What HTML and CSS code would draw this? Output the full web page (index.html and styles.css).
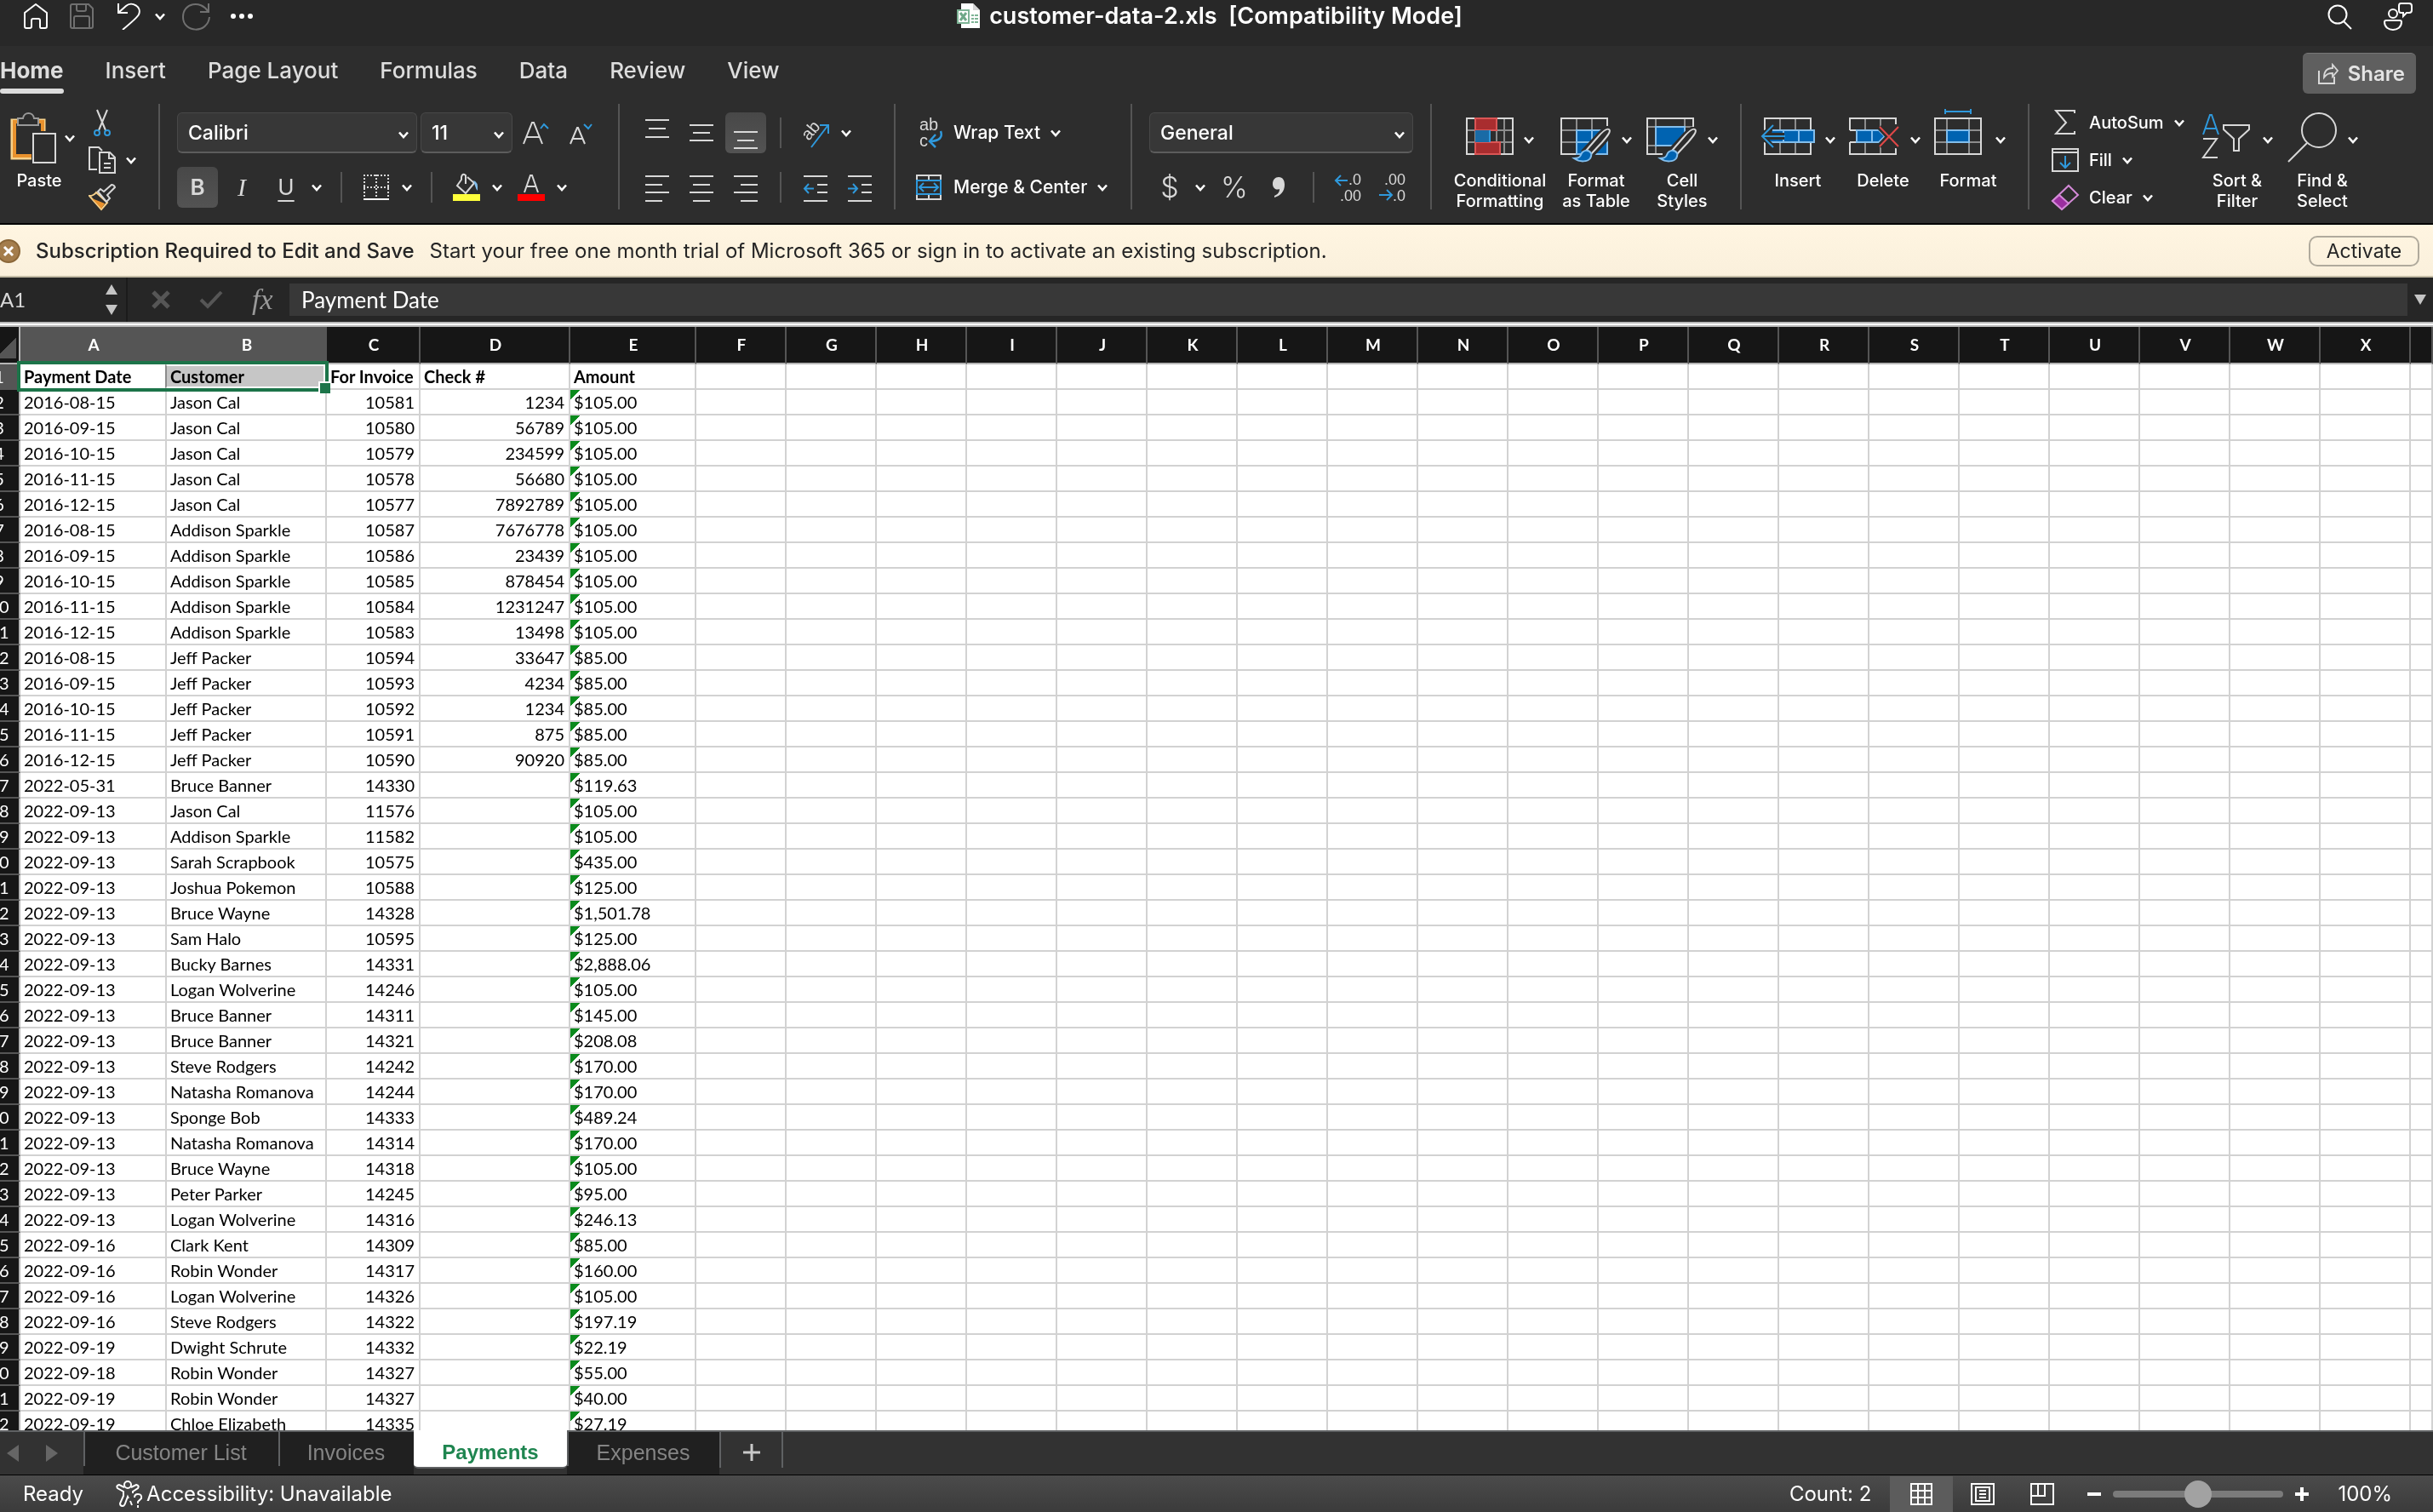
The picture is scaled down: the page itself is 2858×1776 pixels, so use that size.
FILE: index.html
```html
<!DOCTYPE html>
<html lang="en">
<head>
<meta charset="utf-8">
<title>customer-data-2.xls [Compatibility Mode]</title>
<link rel="stylesheet" href="styles.css">
</head>
<body>
<svg class="defs" aria-hidden="true">
  <symbol id="chev" viewBox="0 0 12 9"><path d="M1 1.5l5 5.500 5-5.500" fill="none" stroke="#fff" stroke-width="2.600"/></symbol>
  <symbol id="brush" viewBox="0 0 46 42">
    <path d="M44 3c-3-2-9 4-14 10L16 28l6 6 14-15C42 12 47 6 44 3z" fill="#2d2d2d" stroke="#2d2d2d" stroke-width="7"/>
    <path d="M44 3c-3-2-9 4-14 10L17 28l5 5 14-15C42 11 47 5 44 3z" fill="#2d2d2d" stroke="#d8d8d8" stroke-width="2"/>
    <path d="M23 31c-3-5-10-4-12 2-1 3-4 4-8 4 7 5 16 4 19 0 1-2 2-4 1-6z" fill="#0063b1" stroke="#83beec" stroke-width="2"/>
  </symbol>
</svg>
<div class="app">
  <header class="titlebar">
    <nav class="quick" aria-label="Quick access">
      <button class="plain home" aria-label="Home screen"><svg width="28" height="32" viewBox="0 0 28 32" fill="none" stroke="#fff" stroke-width="2"><path d="M1 12L14 2l13 10v16q0 2-2 2h-5q-1 0-1-2v-7q0-2-2-2h-6q-2 0-2 2v7q0 2-2 2H3q-2 0-2-2z" stroke-linejoin="round"/></svg></button>
      <button class="plain save" aria-label="Save"><svg width="28" height="30" viewBox="0 0 28 30" fill="none" stroke="#707070" stroke-width="2"><path d="M3 1h19l5 5v21q0 2-2 2H3q-2 0-2-2V3q0-2 2-2zM8 1v6q0 2 2 2h7q2 0 2-2V1M5 29V17q0-2 2-2h14q2 0 2 2v12"/></svg></button>
      <button class="plain undo" aria-label="Undo"><svg width="28" height="32" viewBox="0 0 28 32" fill="none" stroke="#fff" stroke-width="2"><path d="M2 1v11h11M2 12L11 4c7-6 19 1 15 10-1 3-7 8-19 18"/></svg></button>
      <button class="plain undo-menu" aria-label="Undo history"><svg class="chev"><use href="#chev"/></svg></button>
      <button class="plain redo" aria-label="Redo"><svg width="34" height="33" viewBox="0 0 34 33" fill="none" stroke="#707070" stroke-width="2"><path d="M31 1v10H21M30 10C22-3 1 0 1 17c0 19 29 20 31 0"/></svg></button>
      <button class="plain more" aria-label="More"><svg width="28" height="8" fill="#fff"><circle cx="4" cy="4" r="3"/><circle cx="14" cy="4" r="3"/><circle cx="24" cy="4" r="3"/></svg></button>
    </nav>
    <div class="doc">
      <svg width="28" height="32" viewBox="0 0 28 32"><path d="M5 1h14l8 8v21H5z" fill="#fff"/><path d="M19 1v8h8z" fill="#d5d5d5"/><path d="M0 8h15v17H0z" fill="#7db395"/><path d="M2 10h11v13H2z" fill="#fff"/><path d="M4 12l7 9M11 12l-7 9" stroke="#6fa888" stroke-width="3"/><path d="M17 14h3v2h-3zm4 0h4v2h-4zm-4 4h3v2h-3zm4 0h4v2h-4zm-4 4h3v2h-3zm4 0h4v2h-4z" fill="#7db395"/></svg>
      <h1>customer-data-2.xls&nbsp; [Compatibility Mode]</h1>
    </div>
    <div class="title-actions">
      <button class="plain" aria-label="Search"><svg width="30" height="32" viewBox="0 0 30 32" fill="none" stroke="#fff" stroke-width="2"><circle cx="12" cy="14" r="10.500"/><path d="M19 22l9 9"/></svg></button>
      <button class="plain" aria-label="Feedback"><svg width="34" height="34" viewBox="0 0 34 34" fill="none" stroke="#fff" stroke-width="2"><circle cx="11" cy="14" r="5"/><path d="M3 22h16q2 0 2 2c0 12-20 12-20 0q0-2 2-2zM20 2h10q3 0 3 3v5q0 3-3 3h-3l-4 4v-4h-3q-2 0-2-3V5q0-3 2-3z"/></svg></button>
    </div>
  </header>

  <div class="tabs">
    <nav aria-label="Ribbon tabs">
      <a href="#home" class="active">Home</a><a href="#insert">Insert</a><a href="#layout">Page Layout</a><a href="#formulas">Formulas</a><a href="#data">Data</a><a href="#review">Review</a><a href="#view">View</a>
    </nav>
    <button class="share"><svg width="24" height="25" viewBox="0 0 24 25" fill="none" stroke="#d8d8d8" stroke-width="2"><path d="M1 9v15h18v-8"/><path d="M7 17c0-7 3-11 10-11V2l6 7-6 7v-4c-5 0-7 1-10 5z" stroke-width="1.800"/></svg>Share</button>
  </div>

  <div class="ribbon">
    <section class="group clipboard">
      <button class="big paste"><span class="pic"><svg width="54" height="60" viewBox="0 0 54 60" fill="none"><path d="M9 9H2v45h23M33 9h7v13" stroke="#f8d28b" stroke-width="3"/><path d="M10 11H5v40h20M34 11h4v11" stroke="#e8912d" stroke-width="4"/><path d="M9 7h6c1-8 12-8 13 0h5v8H9z" fill="#2d2d2d" stroke="#999" stroke-width="2"/><path d="M27 25h26v34H27z" fill="#2d2d2d" stroke="#d8d8d8" stroke-width="2"/></svg><svg class="chev"><use href="#chev"/></svg></span><span>Paste</span></button>
      <div class="stack">
        <button class="plain" aria-label="Cut"><svg width="32" height="32" viewBox="0 0 32 32" fill="none" stroke-width="2"><path d="M10 1l10 24M22 1L12 25" stroke="#d8d8d8"/><circle cx="10" cy="28" r="3" stroke="#2f99dc"/><circle cx="22" cy="28" r="3" stroke="#2f99dc"/></svg></button>
        <div class="split copy"><button class="plain" aria-label="Copy"><svg width="32" height="32" viewBox="0 0 32 32" fill="none" stroke="#d8d8d8" stroke-width="2"><path d="M10 27H1V1h11l4 4M13 7h12l6 6v18H13zM24 7v7h7M18 20h8M18 25h8"/></svg></button><button class="plain" aria-label="Copy options"><svg class="chev"><use href="#chev"/></svg></button></div>
        <button class="plain" aria-label="Format painter"><svg width="32" height="32" viewBox="0 0 32 32" fill="none" stroke-width="2"><path d="M1 14q5 0 8-4l13 12-7 8z" stroke="#f8d28b"/><path d="M4 17l15 6-4 6z" fill="#e8912d"/><path d="M11 9l3-3 4 3 9-8q3 0 4 3l-9 9 3 4-4 4z" stroke="#d8d8d8" fill="#2d2d2d"/></svg></button>
      </div>
    </section>

    <section class="group font">
      <div class="row">
        <div class="pick font-name"><select aria-label="Font"><option>Calibri</option></select><svg class="chev"><use href="#chev"/></svg></div>
        <div class="pick font-size"><select aria-label="Font size"><option>11</option></select><svg class="chev"><use href="#chev"/></svg></div>
        <div class="split sizes">
          <button class="tool" aria-label="Increase font size"><svg width="32" height="32" viewBox="0 0 32 32" fill="none" stroke-width="2"><path d="M1 29L11 4h2l10 25M4 21h16" stroke="#d8d8d8"/><path d="M21 11l4-5 5 5" stroke="#2f99dc"/></svg></button>
          <button class="tool" aria-label="Decrease font size"><svg width="32" height="32" viewBox="0 0 32 32" fill="none" stroke-width="2"><path d="M4 29L12 10h1l8 19M7 23h11" stroke="#d8d8d8"/><path d="M20 6l5 5 4-5" stroke="#2f99dc"/></svg></button>
        </div>
      </div>
      <div class="row">
        <button class="tool on letter bold">B</button>
        <button class="tool letter italic">I</button>
        <div class="split"><button class="tool letter under">U</button><button class="plain menu" aria-label="Underline options"><svg class="chev"><use href="#chev"/></svg></button></div>
        <i class="bar"></i>
        <div class="split"><button class="tool" aria-label="Borders"><svg width="30" height="32" viewBox="0 0 30 32" fill="none" stroke="#d8d8d8" stroke-width="2"><path d="M0 2h30M0 16h30M1 1v26M15 1v26M29 1v26" stroke-dasharray="2 2"/><path d="M0 30h30" stroke="#fff"/></svg></button><button class="plain menu" aria-label="Border options"><svg class="chev"><use href="#chev"/></svg></button></div>
        <i class="bar"></i>
        <div class="split"><button class="tool" aria-label="Fill color"><svg width="32" height="32" viewBox="0 0 32 32" fill="none"><path d="M15 12V2q-4-3-5 2v3L5 14l10 9 10-12-8-7" stroke="#d8d8d8" stroke-width="2"/><path d="M24 8q6 1 5 12-2-2-3-6z" fill="#83beec"/><path d="M0 24h32v8H0z" fill="#ffff3b"/></svg></button><button class="plain menu" aria-label="Fill color options"><svg class="chev"><use href="#chev"/></svg></button></div>
        <div class="split"><button class="tool" aria-label="Font color"><svg width="32" height="32" viewBox="0 0 32 32" fill="none"><path d="M8 22l7-20h2l7 20M10 15h12" stroke="#d8d8d8" stroke-width="2"/><path d="M0 24h32v8H0z" fill="#f00"/></svg></button><button class="plain menu" aria-label="Font color options"><svg class="chev"><use href="#chev"/></svg></button></div>
      </div>
    </section>

    <section class="group align">
      <div class="row">
        <button class="tool" aria-label="Top align"><svg class="lines" viewBox="0 0 28 32"><path d="M0 1h28M4 11h20M0 21h28"/></svg></button>
        <button class="tool" aria-label="Middle align"><svg class="lines" viewBox="0 0 28 32"><path d="M0 7h28M4 16h20M0 25h28"/></svg></button>
        <button class="tool on" aria-label="Bottom align"><svg class="lines" viewBox="0 0 28 32"><path d="M0 15h28M4 25h20M0 34h28"/></svg></button>
        <i class="bar"></i>
        <div class="split"><button class="tool" aria-label="Orientation"><svg width="34" height="36" viewBox="0 0 34 36" fill="none"><text x="0" y="0" transform="translate(9 28) rotate(-50)" class="glyph">ab</text><path d="M12 35L31 10M22 9h10v10" stroke="#2f99dc" stroke-width="2"/></svg></button><button class="plain menu" aria-label="Orientation options"><svg class="chev"><use href="#chev"/></svg></button></div>
      </div>
      <div class="row">
        <button class="tool" aria-label="Align left"><svg class="lines" viewBox="0 0 28 32"><path d="M0 3h28M0 13h20M0 22h28M0 32h20"/></svg></button>
        <button class="tool" aria-label="Center"><svg class="lines" viewBox="0 0 28 32"><path d="M0 3h28M4 13h20M0 22h28M4 32h20"/></svg></button>
        <button class="tool" aria-label="Align right"><svg class="lines" viewBox="0 0 28 32"><path d="M0 3h28M8 13h20M0 22h28M8 32h20"/></svg></button>
        <i class="bar"></i>
        <button class="tool" aria-label="Decrease indent"><svg class="lines" viewBox="0 0 28 32"><path d="M0 3h28M16 13h12M16 22h12M0 32h28"/><path class="blue" d="M12 17.500H1M6 12l-5 5.500 5 5.500"/></svg></button>
        <button class="tool" aria-label="Increase indent"><svg class="lines" viewBox="0 0 28 32"><path d="M0 3h28M16 13h12M16 22h12M0 32h28"/><path class="blue" d="M0 17.500h11M6 12l5 5.500-5 5.500"/></svg></button>
      </div>
    </section>

    <section class="group wrap">
      <button class="wide"><svg width="32" height="40" viewBox="0 0 32 40" fill="none"><text x="4" y="17" class="glyph">ab</text><text x="4" y="36" class="glyph">c</text><path d="M29 18q4 11-12 12M23 22l-7 8 7 7" stroke="#2f99dc" stroke-width="2.500"/></svg>Wrap Text<svg class="chev"><use href="#chev"/></svg></button>
      <button class="wide"><svg width="32" height="32" viewBox="0 0 32 32" fill="none" stroke-width="2"><path d="M1 8V2h28v6M15 2v6M1 24v6h28v-6M15 24v6" stroke="#d8d8d8"/><path d="M1 8h28v16H1zM5 16h20M9 11l-5 5 5 5M21 11l5 5-5 5" stroke="#2f99dc"/></svg>Merge &amp; Center<svg class="chev"><use href="#chev"/></svg></button>
    </section>

    <section class="group number">
      <div class="row"><div class="pick format"><select aria-label="Number format"><option>General</option></select><svg class="chev"><use href="#chev"/></svg></div></div>
      <div class="row">
        <div class="split"><button class="tool symbol">$</button><button class="plain menu" aria-label="Currency options"><svg class="chev"><use href="#chev"/></svg></button></div>
        <button class="tool symbol">%</button>
        <button class="tool" aria-label="Comma style"><svg width="16" height="26" viewBox="0 0 16 26"><path d="M8 1c5 0 7 4 7 9 0 8-5 13-12 15v-2c4-2 6-4 6-8-5 2-8-2-8-6 0-5 3-8 7-8z" fill="#d8d8d8"/></svg></button>
        <i class="bar"></i>
        <button class="tool" aria-label="Increase decimal"><svg width="32" height="40" viewBox="0 0 32 40" fill="none"><text x="31" y="17" text-anchor="end" class="glyph digits">.0</text><text x="31" y="36" text-anchor="end" class="glyph digits">.00</text><path d="M15 12H1M7 6l-6 6 6 6" stroke="#2f99dc" stroke-width="2"/></svg></button>
        <button class="tool" aria-label="Decrease decimal"><svg width="32" height="40" viewBox="0 0 32 40" fill="none"><text x="31" y="17" text-anchor="end" class="glyph digits">.00</text><text x="31" y="36" text-anchor="end" class="glyph digits">.0</text><path d="M0 29h15M9 23l6 6-6 6" stroke="#2f99dc" stroke-width="2"/></svg></button>
      </div>
    </section>

    <section class="group styles">
      <button class="big cond"><span class="pic"><svg width="56" height="60" viewBox="0 0 56 60" fill="none" stroke-width="2"><path d="M11 5v42M45 5v42M36 5v42M1 19h54M1 33h54" stroke="#8c8c8c"/><path d="M1 5h54v42H1z" stroke="#d8d8d8"/><path d="M11 5h25v14H11zM11 33h29v14H11z" fill="#a92d2f" stroke="#da5555"/><path d="M11 19h17v14H11z" fill="#1a6ba6"/><path d="M28 19v14" stroke="#2f99dc"/></svg><svg class="chev"><use href="#chev"/></svg></span><span>Conditional<br>Formatting</span></button>
      <button class="big table"><span class="pic"><svg width="60" height="60" viewBox="0 0 60 60" fill="none" stroke-width="2"><path d="M19 5v42M37 5v14M1 19h54M1 33h18" stroke="#8c8c8c"/><path d="M55 14V5H1v42h18" stroke="#d8d8d8"/><path d="M19 19h36v28H19zM19 33h36M37 19v28" fill="#0063b1" stroke="#83beec"/><use href="#brush" x="13" y="15" width="46" height="42"/></svg><svg class="chev"><use href="#chev"/></svg></span><span>Format<br>as Table</span></button>
      <button class="big cell"><span class="pic"><svg width="60" height="60" viewBox="0 0 60 60" fill="none" stroke-width="2"><path d="M11 5v42M45 5v10M1 15h54M1 37h10" stroke="#8c8c8c"/><path d="M55 16V5H1v42h18" stroke="#d8d8d8"/><path d="M11 15h34v22H11z" fill="#0063b1" stroke="#83beec"/><use href="#brush" x="13" y="15" width="46" height="42"/></svg><svg class="chev"><use href="#chev"/></svg></span><span>Cell<br>Styles</span></button>
    </section>

    <section class="group cells">
      <button class="big"><span class="pic"><svg width="64" height="60" viewBox="0 0 64 60" fill="none" stroke-width="2"><path d="M23 5v14M41 5v14M23 33v14M41 33v14" stroke="#8c8c8c"/><path d="M5 19V5h54v14M5 33v14h54V33" stroke="#d8d8d8"/><path d="M14 19h49v14H10M27 19v14M45 19v14" fill="#0063b1" stroke="#83beec"/><path d="M10 26h18" stroke="#2d2d2d" stroke-width="8"/><path d="M15 13L2 26l13 13" stroke="#2d2d2d" stroke-width="6"/><path d="M10 22h18v8H10" stroke="#2f99dc" stroke-width="0"/><path d="M2 26h27M15 13L2 26l13 13" stroke="#2f99dc"/></svg><svg class="chev"><use href="#chev"/></svg></span><span>Insert</span></button>
      <button class="big"><span class="pic"><svg width="64" height="60" viewBox="0 0 64 60" fill="none" stroke-width="2"><path d="M23 5v14M41 5v14M23 33v14M41 33v14" stroke="#8c8c8c"/><path d="M5 19V5h54v7M5 19h8M5 33h8M5 33v14h54v-7" stroke="#d8d8d8"/><path d="M13 19h26l7 7-7 7H13zM31 19v14" fill="#0063b1" stroke="#83beec"/><path d="M40 15l22 23M62 15L40 38" stroke="#2d2d2d" stroke-width="7"/><path d="M40 15l22 23M62 15L40 38" stroke="#e04848"/></svg><svg class="chev"><use href="#chev"/></svg></span><span>Delete</span></button>
      <button class="big"><span class="pic"><svg width="64" height="60" viewBox="0 0 64 60" fill="none" stroke-width="2" overflow="visible"><path d="M19 5v42M45 5v42M5 19h54M5 33h54" stroke="#8c8c8c"/><path d="M5 5h54v42H5z" stroke="#d8d8d8"/><path d="M19 19h26v14H19z" fill="#0063b1" stroke="#83beec"/><path d="M17-3h30M17-6v6M47-6v6" stroke="#2f99dc"/></svg><svg class="chev"><use href="#chev"/></svg></span><span>Format</span></button>
    </section>

    <section class="group editing">
      <div class="stack">
        <button class="wide"><svg width="32" height="32" viewBox="0 0 32 32" fill="none" stroke="#d8d8d8" stroke-width="2"><path d="M27 5V2H5l12 14L5 29h22v-3"/></svg>AutoSum<svg class="chev"><use href="#chev"/></svg></button>
        <button class="wide"><svg width="32" height="32" viewBox="0 0 32 32" fill="none" stroke="#d8d8d8" stroke-width="2"><path d="M1 3h30v26H1zM1 7h30"/><path d="M16 11v14M10 19l6 6 6-6" stroke="#2f99dc"/></svg>Fill<svg class="chev"><use href="#chev"/></svg></button>
        <button class="wide"><svg width="32" height="32" viewBox="0 0 32 32" fill="none" stroke="#d48ad8" stroke-width="2"><path d="M20 2l11 11-19 17L1 20z"/><path d="M9 13l11 10-8 7L1 20z" fill="#9b2fa0"/></svg>Clear<svg class="chev"><use href="#chev"/></svg></button>
      </div>
      <button class="big"><span class="pic"><svg width="60" height="60" viewBox="0 0 60 60" fill="none" stroke="#d8d8d8" stroke-width="2"><path d="M2 24l8-23h2l8 23M5 17h12" stroke="#2f99dc"/><path d="M2 29h16L2 51h17M26 13h30v5L44 29v14h-6V29L26 18z"/></svg><svg class="chev"><use href="#chev"/></svg></span><span>Sort &amp;<br>Filter</span></button>
      <button class="big"><span class="pic"><svg width="60" height="60" viewBox="0 0 60 60" fill="none" stroke="#d8d8d8" stroke-width="2" overflow="visible"><circle cx="38" cy="19" r="20"/><path d="M24 34L2 56"/></svg><svg class="chev"><use href="#chev"/></svg></span><span>Find &amp;<br>Select</span></button>
    </section>
  </div>

  <div class="notice" role="status">
    <button class="plain dismiss" aria-label="Dismiss"><svg width="24" height="28" viewBox="0 0 24 28"><circle cx="10" cy="14" r="13" fill="#a47d4c" stroke="#8a6638" stroke-width="2"/><path d="M5 9l10 10M15 9L5 19" stroke="#fff" stroke-width="3"/></svg></button>
    <strong>Subscription Required to Edit and Save</strong>
    <span>Start your free one month trial of Microsoft 365 or sign in to activate an existing subscription.</span>
    <button class="activate">Activate</button>
  </div>

  <div class="formula">
    <div class="cellref"><span>A1</span><svg width="14" height="38" viewBox="0 0 14 38" fill="#c4c4c4"><path d="M0 13L7 1l7 12zM0 25l7 12 7-12z"/></svg></div>
    <div class="fx-tools">
      <button class="plain" aria-label="Cancel"><svg width="22" height="22" viewBox="0 0 22 22"><path d="M2 2l18 18M20 2L2 20" stroke="#565656" stroke-width="5"/></svg></button>
      <button class="plain" aria-label="Enter"><svg width="28" height="22" viewBox="0 0 28 22"><path d="M2 11l8 8L26 2" fill="none" stroke="#565656" stroke-width="4"/></svg></button>
      <button class="plain fx">fx</button>
    </div>
    <input type="text" value="Payment Date" aria-label="Formula">
    <button class="plain expand" aria-label="Expand formula bar"><svg width="14" height="12" fill="#c4c4c4"><path d="M0 0h14L7 12z"/></svg></button>
  </div>

  <main class="sheet">
    <table id="grid"></table>
    <div class="selection"></div>
  </main>

  <nav class="sheets" aria-label="Sheets">
    <div class="arrows">
      <button class="plain" aria-label="Previous sheet"><svg width="14" height="20" fill="#666"><path d="M14 0v20L0 10z"/></svg></button>
      <button class="plain" aria-label="Next sheet"><svg width="14" height="20" fill="#666"><path d="M0 0v20l14-10z"/></svg></button>
    </div>
    <a href="#customers" class="t1">Customer List</a><a href="#invoices" class="t2">Invoices</a><a href="#payments" class="current">Payments</a><a href="#expenses" class="t3">Expenses</a>
    <button class="add" aria-label="Add sheet"><svg width="20" height="20"><path d="M10 0v20M0 10h20" stroke="#c8c8c8" stroke-width="3"/></svg></button>
  </nav>

  <footer class="status">
    <span class="ready">Ready</span>
    <button class="access"><svg width="32" height="32" viewBox="0 0 32 32" fill="none" stroke="#fff" stroke-width="2"><circle cx="14" cy="5" r="4"/><path d="M10 8L4 5q-4 1-2 4l7 4v5L5 27q0 3 3 3 2 0 3-3l3-8 1 2M18 8l6-3q4 1 2 4l-6 4v2M17 24l2 5"/><path d="M22 20q0-4 4-4 5 0 4 5l-4 4v2M26 29v3"/></svg>Accessibility: Unavailable</button>
    <span class="count">Count: 2</span>
    <div class="views">
      <button class="on" aria-label="Normal view"><svg width="26" height="28" viewBox="0 0 26 28" fill="none" stroke="#fff" stroke-width="2"><path d="M1 2h24v24H1zM9 2v24M17 2v24M1 10h24M1 18h24"/></svg></button>
      <button aria-label="Page layout view"><svg width="28" height="28" viewBox="0 0 28 28" fill="none" stroke="#fff" stroke-width="2"><path d="M1 2h26v24H1zM6 6h16v16H6zM10 10h8M10 14h8M10 18h8"/></svg></button>
      <button aria-label="Page break view"><svg width="28" height="28" viewBox="0 0 28 28" fill="none" stroke="#fff" stroke-width="2"><path d="M1 2h26v24H1zM9 2v14M17 2v14H1"/></svg></button>
    </div>
    <button class="plain" aria-label="Zoom out"><svg width="16" height="16"><path d="M0 8h16" stroke="#fff" stroke-width="4"/></svg></button>
    <input type="range" min="0" max="100" value="50" aria-label="Zoom">
    <button class="plain" aria-label="Zoom in"><svg width="16" height="16"><path d="M0 8h16M8 0v16" stroke="#fff" stroke-width="4"/></svg></button>
    <span class="percent">100%</span>
  </footer>
</div>
<script src="grid.js"></script>
</body>
</html>
```
FILE: styles.css
```css
* { box-sizing: border-box; }
body { margin: 0; background: #282828; color: #fff; font: 500 20px/24px Inter, "Liberation Sans", sans-serif; }
.defs { position: absolute; width: 0; height: 0; }
button, select, input { font: inherit; color: inherit; margin: 0; }
button { border: 0; padding: 0; background: none; }
svg { display: block; flex: none; }
a { color: inherit; text-decoration: none; }
.chev { width: 12px; height: 9px; }
.app { display: flex; flex-direction: column; height: 100vh; overflow: hidden; }

.titlebar { display: grid; grid-template-columns: 1fr auto 1fr; height: 54px; padding: 2px 24px 0 28px; align-items: start; background: #282828; }
.quick { display: flex; align-items: center; height: 34px; }
.save { margin-left: 26px; }
.undo { margin-left: 27px; }
.undo-menu { margin-left: 17px; }
.redo { margin-left: 20px; }
.more { margin-left: 22px; }
.doc { display: flex; align-items: center; gap: 10px; height: 34px; padding-right: 20px; }
.doc h1 { margin: 0; font-size: 27px; line-height: 34px; font-weight: 600; white-space: nowrap; }
.title-actions { display: flex; justify-content: flex-end; gap: 36px; }

.tabs { display: flex; justify-content: space-between; height: 58px; padding-right: 20px; background: #2d2d2d; }
.tabs nav { display: flex; gap: 49px; }
.tabs a { position: relative; padding-top: 12px; font-size: 26px; line-height: 34px; color: #ddd; white-space: nowrap; }
.tabs .active { font-weight: 700; }
.tabs .active::after { content: ""; position: absolute; left: 0; right: 0; bottom: 2px; height: 6px; border-radius: 3px; background: #dcdcdc; }
.share { display: flex; align-items: center; gap: 11px; align-self: flex-start; height: 48px; margin-top: 8px; padding: 0 13px 0 18px; border-radius: 6px; border-top: 1px solid #777; background: #5f5f5f; color: #e4e4e4; font-size: 24px; font-weight: 600; }

.ribbon { display: flex; padding: 10px 0 16px; border-bottom: 2px solid #000; height: 152px; background: #2d2d2d; }
.group { display: flex; flex-direction: column; gap: 16px; height: 124px; padding: 10px 0 0 20px; border-right: 2px solid #555; flex: none; }
.row, .split { display: flex; align-items: center; }
.row { gap: 4px; height: 48px; }
.sizes { gap: 4px; }
.bar { width: 2px; height: 36px; margin: 0 12px; background: #555; }
.tool { display: flex; align-items: center; justify-content: center; width: 48px; height: 48px; border-radius: 6px; }
.tool.on { background: linear-gradient(#484848, #535353); }
.menu { display: flex; justify-content: center; width: 24px; }
.letter { font-size: 26px; line-height: 30px; color: #d8d8d8; font-weight: 400; }
.bold { font-weight: 600; }
.italic { font-family: "Liberation Serif", serif; font-style: italic; font-size: 30px; }
.under { text-decoration: underline; text-underline-offset: 6px; text-decoration-thickness: 2px; }
.symbol { font: 300 34px/40px Inter, sans-serif; color: #d8d8d8; }
.pick { display: grid; align-items: center; }
.pick > * { grid-area: 1 / 1; }
.pick .chev { justify-self: end; margin-right: 10px; margin-top: 4px; pointer-events: none; }
.pick select { appearance: none; width: 100%; height: 48px; padding: 0 12px; border: 1px solid #484848; border-bottom: 2px solid #5c5c5c; border-radius: 6px; background: #373737; font-size: 23px; }
.font-name { width: 282px; }
.font-size { width: 108px; }
.format { width: 310px; }
.tool svg, .wide svg { overflow: visible; }
.glyph { font: 400 20px/20px "Liberation Sans", sans-serif; fill: #d8d8d8; }
.digits { font-size: 18px; }
.lines { width: 28px; height: 32px; stroke: #d8d8d8; stroke-width: 2px; fill: none; }
.lines .blue { stroke: #2f99dc; }

.big { display: flex; flex-direction: column; align-items: center; width: 100px; color: #fff; }
.pic { display: flex; align-items: center; gap: 12px; height: 60px; margin: 2px 0 6px; }
.stack { display: flex; flex-direction: column; gap: 12px; align-items: flex-start; margin-top: -4px; }
.wide { display: flex; align-items: center; gap: 12px; height: 32px; white-space: nowrap; }
.clipboard, .styles, .cells, .editing { flex-direction: row; align-items: flex-start; gap: 0; }
.clipboard { width: 188px; padding-left: 0; }
.paste { width: 92px; }
.paste .pic { gap: 10px; margin: 0 0 8px; padding-left: 8px; }
.clipboard .stack { padding-left: 12px; }
.copy { gap: 12px; }
.font { width: 540px; }
.align { width: 324px; }
.wrap { width: 278px; padding-left: 24px; }
.wrap .wide { height: 48px; font-size: 21px; }
.number { width: 352px; }
.styles { width: 364px; }
.cond { width: 120px; }
.table { width: 106px; }
.cell { width: 96px; }
.cells { width: 338px; padding-left: 16px; }
.editing { padding-left: 26px; border-right: 0; }
.editing .stack { width: 168px; }

.notice { display: flex; align-items: center; height: 62px; padding: 1px 16px 0 0; border-bottom: 2px solid #c4bca6; background: linear-gradient(#fff5e1, #faf0dc); color: #252525; font-size: 24px; line-height: 30px; white-space: nowrap; }
.notice strong { font-weight: 500; margin: 0 18px; }
.notice span { font-weight: 400; }
.activate { margin-left: auto; width: 130px; height: 36px; border: 2px solid #b0aa9c; border-radius: 10px; font-size: 23px; font-weight: 400; }

.formula { display: flex; align-items: center; height: 52px; padding-right: 8px; background: #262626; font: 400 26px/32px Lato, sans-serif; flex: none; }
.cellref { display: flex; align-items: center; justify-content: space-between; width: 150px; height: 52px; padding-right: 10px; border-right: 2px solid #1b1b1b; color: #d8d8d8; font-size: 24px; }
.fx-tools { display: flex; align-items: center; gap: 34px; width: 190px; padding-left: 28px; }
.fx { font: italic 34px/36px "Liberation Serif", serif; color: #999; }
.formula input { flex: 1; min-width: 0; height: 38px; padding: 0 14px; border: 0; background: #383838; }
.expand { padding-left: 8px; }

.sheet { position: relative; flex: 1; min-height: 0; overflow: hidden; border-top: 6px double #b9b9b9; background: #fff; color: #000; }
.sheet table { table-layout: fixed; width: calc(100% + 24px); margin-left: -24px; border-collapse: separate; border-spacing: 0; font: 400 20px/28px Lato, sans-serif; }
.c-head { width: 48px; }
.c-a { width: 172px; }
.c-b { width: 188px; }
.c-c { width: 110px; }
.c-d { width: 176px; }
.c-e { width: 148px; }
.c-std { width: 106px; }
.sheet td { height: 30px; padding: 0 4px; border-right: 2px solid #d2d2d2; border-bottom: 2px solid #d2d2d2; white-space: nowrap; }
.sheet .num { padding-right: 5px; text-align: right; }
.sheet .title td { font-weight: 700; }
.sheet .flag { background: linear-gradient(135deg, #0a8a1c 8px, transparent 8px) no-repeat; }
.sheet thead th { height: 44px; padding: 0 0 0 2px; border-right: 2px solid #555; border-bottom: 2px solid #b5b5b5; background: #161616; color: #fff; font-size: 19px; font-weight: 700; }
.sheet thead .picked { background: #555; }
.sheet thead .corner { border-right-color: #b5b5b5; background: linear-gradient(135deg, #161616 50%, #555 50%) 24px 7px / 19px 30px no-repeat #161616; }
.sheet tbody th { padding: 0; border-right: 2px solid #b5b5b5; border-bottom: 2px solid #555; background: #161616; color: #fff; font-weight: 400; }
.sheet .title th { background: #555; }
.selection { position: absolute; left: 20px; top: 40px; width: 366px; height: 36px; border: 4px solid #1c7449; }
.selection::before { content: ""; position: absolute; left: 170px; right: 0; top: 0; bottom: 0; border: 2px solid #fff; border-left: 2px solid #aaa; background: #c6c6c6; mix-blend-mode: multiply; }
.selection::after { content: ""; position: absolute; right: -6px; bottom: -6px; width: 12px; height: 12px; border: 2px solid #fff; border-right: 0; border-bottom: 0; background: #1c7449; }

.sheets { display: flex; height: 53px; flex: none; border-bottom: 1px solid #000; background: #323232; color: #858585; font: 400 25px/30px "Liberation Sans", sans-serif; box-shadow: inset 0 2px #5f6163; }
.arrows { display: flex; align-items: center; gap: 32px; width: 98px; padding: 2px 8px 0; }
.sheets a { display: flex; align-items: center; justify-content: center; padding-bottom: 2px; margin-top: 2px; background: linear-gradient(#5f6163, #5f6163) 0 0 / 2px 40px no-repeat #202020; }
.t1 { width: 229px; }
.t2 { width: 159px; }
.t3 { width: 179px; }
.sheets .current { width: 180px; height: 45px; margin-top: 0; padding: 8px 0 0; border-radius: 0 0 5px 5px; border-bottom: 2px solid #5f6163; background: #fff; color: #1f8550; font-weight: 700; font-size: 24px; }
.add { display: flex; align-items: center; justify-content: center; width: 75px; height: 42px; margin-top: 2px; padding-top: 6px; border: solid #5f6163; border-width: 0 2px; }

.status { display: flex; align-items: center; height: 43px; flex: none; padding: 1px 48px 0 27px; background: linear-gradient(#4b4b4b, #3b3b3b); font-size: 24px; line-height: 30px; font-weight: 400; }
.access { display: flex; align-items: center; gap: 4px; margin-left: 38px; }
.count { margin-left: auto; margin-right: 22px; }
.views { display: flex; align-self: stretch; margin-right: 18px; }
.views button { display: flex; align-items: center; justify-content: center; width: 70px; }
.views button.on { width: 74px; background: #5c5c5c; }
.status input { appearance: none; width: 200px; height: 32px; margin: 0 14px; background: none; }
.status input::-webkit-slider-runnable-track { height: 8px; border-radius: 4px; background: #7b7b7b; }
.status input::-webkit-slider-thumb { appearance: none; width: 32px; height: 32px; margin-top: -12px; border-radius: 50%; background: #a2a2a2; }
.percent { margin-left: 34px; }
```
FILE: grid.js
```js
const payments = [
  ["2016-08-15", "Jason Cal", "10581", "1234", "$105.00"],
  ["2016-09-15", "Jason Cal", "10580", "56789", "$105.00"],
  ["2016-10-15", "Jason Cal", "10579", "234599", "$105.00"],
  ["2016-11-15", "Jason Cal", "10578", "56680", "$105.00"],
  ["2016-12-15", "Jason Cal", "10577", "7892789", "$105.00"],
  ["2016-08-15", "Addison Sparkle", "10587", "7676778", "$105.00"],
  ["2016-09-15", "Addison Sparkle", "10586", "23439", "$105.00"],
  ["2016-10-15", "Addison Sparkle", "10585", "878454", "$105.00"],
  ["2016-11-15", "Addison Sparkle", "10584", "1231247", "$105.00"],
  ["2016-12-15", "Addison Sparkle", "10583", "13498", "$105.00"],
  ["2016-08-15", "Jeff Packer", "10594", "33647", "$85.00"],
  ["2016-09-15", "Jeff Packer", "10593", "4234", "$85.00"],
  ["2016-10-15", "Jeff Packer", "10592", "1234", "$85.00"],
  ["2016-11-15", "Jeff Packer", "10591", "875", "$85.00"],
  ["2016-12-15", "Jeff Packer", "10590", "90920", "$85.00"],
  ["2022-05-31", "Bruce Banner", "14330", "", "$119.63"],
  ["2022-09-13", "Jason Cal", "11576", "", "$105.00"],
  ["2022-09-13", "Addison Sparkle", "11582", "", "$105.00"],
  ["2022-09-13", "Sarah Scrapbook", "10575", "", "$435.00"],
  ["2022-09-13", "Joshua Pokemon", "10588", "", "$125.00"],
  ["2022-09-13", "Bruce Wayne", "14328", "", "$1,501.78"],
  ["2022-09-13", "Sam Halo", "10595", "", "$125.00"],
  ["2022-09-13", "Bucky Barnes", "14331", "", "$2,888.06"],
  ["2022-09-13", "Logan Wolverine", "14246", "", "$105.00"],
  ["2022-09-13", "Bruce Banner", "14311", "", "$145.00"],
  ["2022-09-13", "Bruce Banner", "14321", "", "$208.08"],
  ["2022-09-13", "Steve Rodgers", "14242", "", "$170.00"],
  ["2022-09-13", "Natasha Romanova", "14244", "", "$170.00"],
  ["2022-09-13", "Sponge Bob", "14333", "", "$489.24"],
  ["2022-09-13", "Natasha Romanova", "14314", "", "$170.00"],
  ["2022-09-13", "Bruce Wayne", "14318", "", "$105.00"],
  ["2022-09-13", "Peter Parker", "14245", "", "$95.00"],
  ["2022-09-13", "Logan Wolverine", "14316", "", "$246.13"],
  ["2022-09-16", "Clark Kent", "14309", "", "$85.00"],
  ["2022-09-16", "Robin Wonder", "14317", "", "$160.00"],
  ["2022-09-16", "Logan Wolverine", "14326", "", "$105.00"],
  ["2022-09-16", "Steve Rodgers", "14322", "", "$197.19"],
  ["2022-09-19", "Dwight Schrute", "14332", "", "$22.19"],
  ["2022-09-18", "Robin Wonder", "14327", "", "$55.00"],
  ["2022-09-19", "Robin Wonder", "14327", "", "$40.00"],
  ["2022-09-19", "Chloe Elizabeth", "14335", "", "$27.19"]
];
const letters = "ABCDEFGHIJKLMNOPQRSTUVWX".split("");
const empty = "<td></td>".repeat(20);
const cols = ["head", "a", "b", "c", "d", "e"].concat(Array(19).fill("std"))
  .map(c => `<col class="c-${c}">`).join("") + "<col>";
const head = letters.map((l, i) => `<th scope="col"${i < 2 ? ' class="picked"' : ""}>${l}</th>`).join("");
const titles = ["Payment Date", "Customer", "For Invoice", "Check #", "Amount"]
  .map(t => `<td>${t}</td>`).join("");
const kinds = ["", "", "num", "num", "flag"];
const rows = payments.map((r, i) =>
  `<tr><th scope="row">${i + 2}</th>${r.map((v, c) => `<td class="${kinds[c]}">${v}</td>`).join("")}${empty}</tr>`).join("");
document.getElementById("grid").innerHTML =
  `<colgroup>${cols}</colgroup><thead><tr><th class="corner"></th>${head}<th></th></tr></thead>` +
  `<tbody><tr class="title"><th scope="row">1</th>${titles}${empty}</tr>${rows}</tbody>`;
```
